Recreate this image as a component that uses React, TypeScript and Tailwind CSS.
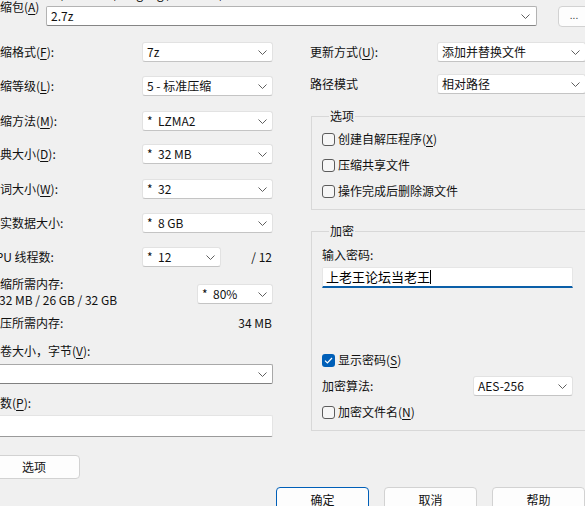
import React from "react";

const Chevron = () => (
  <svg width="9" height="5" viewBox="0 0 9 5" className="shrink-0">
    <path d="M0.5 0.5 L4.5 4.5 L8.5 0.5" fill="none" stroke="#5f5f5f" strokeWidth="1" />
  </svg>
);

const U = ({ c }: { c: string }) => <span className="underline underline-offset-2">{c}</span>;

const Drop = ({ text, className = "" }: { text: React.ReactNode; className?: string }) => (
  <div
    className={`flex h-[20px] items-center justify-between rounded-[3px] border border-[#e2e2e2] border-b-[#c4c4c4] bg-white pl-[4px] pr-[5px] leading-[16px] ${className}`}
  >
    <span className="whitespace-pre">{text}</span>
    <Chevron />
  </div>
);

const Check = ({ checked = false }: { checked?: boolean }) =>
  checked ? (
    <span className="flex h-[13px] w-[13px] shrink-0 items-center justify-center rounded-[3px] bg-[#005fb8]">
      <svg width="9" height="7" viewBox="0 0 9 7">
        <path d="M1 3.6 L3.4 6 L8 1" fill="none" stroke="white" strokeWidth="1.2" />
      </svg>
    </span>
  ) : (
    <span className="h-[13px] w-[13px] shrink-0 rounded-[3px] border border-[#5c5c5c] bg-[#f6f6f6]" />
  );

const CheckRow = ({ checked = false, children, className = "" }: { checked?: boolean; children: React.ReactNode; className?: string }) => (
  <label className={`flex h-[16px] items-center gap-[3px] leading-[16px] ${className}`}>
    <Check checked={checked} />
    <span>{children}</span>
  </label>
);

const LRow = ({ label, children, className = "" }: { label: React.ReactNode; children: React.ReactNode; className?: string }) => (
  <div className={`flex h-[20px] items-center justify-between ${className}`}>
    <span className="leading-[16px]">{label}</span>
    {children}
  </div>
);

const Btn = ({ text, primary = false, className = "" }: { text: string; primary?: boolean; className?: string }) => (
  <div
    className={`flex items-center justify-center rounded-[4px] border bg-[#fdfdfd] ${
      primary ? "border-[#005fb8]" : "border-[#d2d2d2]"
    } ${className}`}
  >
    {text}
  </div>
);

export default function App() {
  return (
    <div className="h-[506px] w-[585px] overflow-hidden bg-[#f0f0f0] font-['Noto_Sans_CJK_SC','Noto_Sans',sans-serif] text-[12px] text-[#111]">
      <div className="-ml-[12px] -mt-[14px] flex w-[612px] flex-col">
        {/* top */}
        <div className="flex items-start">
          <div className="mt-[13px] w-[58px] leading-[16px]">
            压缩包(<U c="A" />)
          </div>
          <div className="flex w-[491px] flex-col">
            <div className="h-[18px] whitespace-nowrap pt-[0px] leading-[16px]">H:\迅雷云盘\aoligang\超大版本\</div>
            <div className="mt-[2px] flex h-[20px] items-center justify-between rounded-[2px] border border-[#b3b3b3] border-b-[#858585] bg-white pl-[4px] pr-[6px] leading-[16px]">
              <span>2.7z</span>
              <Chevron />
            </div>
          </div>
          <div className="ml-[21px] mt-[20px] flex h-[21px] w-[32px] items-center justify-center rounded-[4px] border border-[#d2d2d2] bg-[#fdfdfd] pb-[4px] text-[10px] text-[#444]">
            ...
          </div>
        </div>

        {/* columns */}
        <div className="mt-[15px] flex items-start">
          {/* left */}
          <div className="flex w-[285px] flex-col">
            <LRow label={<>压缩格式(<U c="F" />):</>}>
              <Drop text="7z" className="w-[131px]" />
            </LRow>
            <LRow className="mt-[14px]" label={<>压缩等级(<U c="L" />):</>}>
              <Drop text="5 - 标准压缩" className="w-[131px]" />
            </LRow>
            <LRow className="mt-[15px]" label={<>压缩方法(<U c="M" />):</>}>
              <Drop text="*  LZMA2" className="w-[131px]" />
            </LRow>
            <LRow className="mt-[13px]" label={<>字典大小(<U c="D" />):</>}>
              <Drop text="*  32 MB" className="w-[131px]" />
            </LRow>
            <LRow className="mt-[15px]" label={<>单词大小(<U c="W" />):</>}>
              <Drop text="*  32" className="w-[131px]" />
            </LRow>
            <LRow className="mt-[14px]" label="固实数据大小:">
              <Drop text="*  8 GB" className="w-[131px]" />
            </LRow>
            <div className="mt-[14px] flex h-[20px] items-center">
              <span className="w-[154px] leading-[16px]">CPU 线程数:</span>
              <Drop text="*  12" className="w-[79px]" />
              <span className="ml-auto pr-[1px] leading-[16px]">/ 12</span>
            </div>
            <div className="mt-[9px] flex items-start justify-between">
              <div className="flex flex-col leading-[16px]">
                <span>压缩所需内存:</span>
                <span className="pl-[11px]">32 MB / 26 GB / 32 GB</span>
              </div>
              <Drop text="*  80%" className="mt-[8px] w-[76px]" />
            </div>
            <div className="mt-[7px] flex justify-between leading-[16px]">
              <span>解压所需内存:</span>
              <span className="pr-[1px]">34 MB</span>
            </div>
            <div className="mt-[12px] leading-[16px]">
              分卷大小，字节(<U c="V" />):
            </div>
            <div className="mt-[5px] flex h-[20px] items-center justify-end rounded-[2px] border border-[#a8a8a8] border-b-[#808080] bg-white pr-[5px]">
              <Chevron />
            </div>
            <div className="mt-[11px] leading-[16px]">
              参数(<U c="P" />):
            </div>
            <div className="mt-[4px] h-[22px] rounded-[2px] border border-[#e4e4e4] border-b-[#9a9a9a] bg-white" />
            <Btn text="选项" className="mt-[18px] h-[24px] w-[92px]" />
          </div>

          {/* right */}
          <div className="ml-[37px] flex w-[290px] flex-col">
            <div className="flex h-[20px] items-center">
              <span className="w-[127px] leading-[16px]">
                更新方式(<U c="U" />):
              </span>
              <Drop text="添加并替换文件" className="w-[149px]" />
            </div>
            <div className="mt-[12px] flex h-[20px] items-center">
              <span className="w-[127px] leading-[16px]">路径模式</span>
              <Drop text="相对路径" className="w-[149px]" />
            </div>

            <fieldset className="ml-[1px] mt-[14px] w-[289px] border border-[#d8d8d8] pb-[10px] pl-[10px]">
              <legend className="ml-[7px] px-[1px] leading-[16px]">选项</legend>
              <div className="mt-[7px] flex flex-col gap-[10px]">
                <CheckRow>
                  创建自解压程序(<U c="X" />)
                </CheckRow>
                <CheckRow>压缩共享文件</CheckRow>
                <CheckRow>操作完成后删除源文件</CheckRow>
              </div>
            </fieldset>

            <fieldset className="ml-[1px] mt-[13px] w-[289px] border border-[#d8d8d8] pb-[10px] pl-[10px]">
              <legend className="ml-[7px] px-[1px] leading-[16px]">加密</legend>
              <div className="mt-[8px] leading-[16px]">输入密码:</div>
              <div className="mt-[4px] flex h-[21px] w-[251px] items-center rounded-t-[2px] border border-[#e6e6e6] border-b-2 border-b-[#0b5fa8] bg-white pl-[3px] text-[13px] leading-[16px] text-black">
                <span>上老王论坛当老王</span>
                <span className="h-[14px] w-[1px] bg-black" />
              </div>
              <CheckRow checked className="mt-[64px]">
                显示密码(<U c="S" />)
              </CheckRow>
              <div className="mt-[8px] flex h-[20px] items-center">
                <span className="w-[151px] leading-[16px]">加密算法:</span>
                <Drop text="AES-256" className="w-[100px]" />
              </div>
              <CheckRow className="mt-[8px]">
                加密文件名(<U c="N" />)
              </CheckRow>
            </fieldset>
          </div>
        </div>

        {/* bottom buttons */}
        <div className="mt-[8px] flex justify-end gap-[15px] pr-[15px]">
          <Btn text="确定" primary className="h-[26px] w-[93px]" />
          <Btn text="取消" className="h-[26px] w-[93px]" />
          <Btn text="帮助" className="h-[26px] w-[93px]" />
        </div>
      </div>
    </div>
  );
}
